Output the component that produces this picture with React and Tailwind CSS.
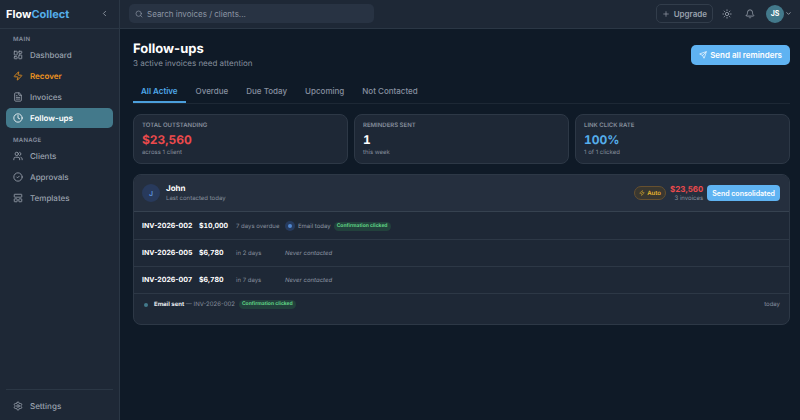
import React from 'react';
import {
  LayoutDashboard, Zap, FileText, Clock, Users, CircleCheck,
  Settings, ChevronLeft, ChevronDown, Search, Plus, Sun, Bell, Send,
} from 'lucide-react';

const mainNav = [
  { label: 'Dashboard', icon: LayoutDashboard, style: 'font-medium text-[#9aa2ae]' },
  { label: 'Recover', icon: Zap, style: 'font-semibold text-[#f0961f]' },
  { label: 'Invoices', icon: FileText, style: 'font-medium text-[#9aa2ae]' },
  { label: 'Follow-ups', icon: Clock, style: 'font-semibold text-white bg-[#43798b]', current: true },
];

function TemplateIcon({ size }) {
  return (
    <svg width={size} height={size} viewBox="0 0 24 24" fill="none" stroke="currentColor" strokeWidth="2" strokeLinejoin="round" className="shrink-0" aria-hidden="true">
      <rect x="3" y="3" width="18" height="7" rx="1" />
      <rect x="3" y="14" width="7" height="7" rx="1" />
      <rect x="14" y="14" width="7" height="7" rx="1" />
    </svg>
  );
}

const manageNav = [
  { label: 'Clients', icon: Users, style: 'font-medium text-[#9aa2ae]' },
  { label: 'Approvals', icon: CircleCheck, style: 'font-medium text-[#9aa2ae]' },
  { label: 'Templates', icon: TemplateIcon, style: 'font-medium text-[#9aa2ae]' },
];

const tabs = ['All Active', 'Overdue', 'Due Today', 'Upcoming', 'Not Contacted'];

const stats = [
  { label: 'TOTAL OUTSTANDING', value: '$23,560', note: 'across 1 client', color: 'text-[#ec4a4c]' },
  { label: 'REMINDERS SENT', value: '1', note: 'this week', color: 'text-white' },
  { label: 'LINK CLICK RATE', value: '100%', note: '1 of 1 clicked', color: 'text-[#55aeeb]' },
];

const invoices = [
  { id: 'INV-2026-002', amount: '$10,000', due: '7 days overdue', contacted: true },
  { id: 'INV-2026-005', amount: '$6,780', due: 'in 2 days' },
  { id: 'INV-2026-007', amount: '$6,780', due: 'in 7 days' },
];

function NavLink({ item }) {
  const Icon = item.icon;
  return (
    <a href="#" aria-current={item.current ? 'page' : undefined} className={`flex h-5 items-center gap-[7px] rounded-[5px] px-[7px] text-[8px] ${item.style}`}>
      <Icon size={10} />
      {item.label}
    </a>
  );
}

function Confirmed() {
  return (
    <span className="rounded-full bg-[#22413c] px-[3px] text-[5px] leading-[9px] font-bold text-[#5fd184]">
      Confirmation clicked
    </span>
  );
}

function Sidebar() {
  return (
    <aside className="flex w-[120px] shrink-0 flex-col border-r border-[#2b3745] bg-[#1e2836]">
      <div className="flex h-[29px] items-center justify-between border-b border-[#2b3745] pr-2.5 pb-px pl-1.5">
        <span className="text-[11px] leading-4 font-bold text-white">
          Flow<span className="text-[#55aeeb]">Collect</span>
        </span>
        <button aria-label="Collapse sidebar" className="text-[#a3abb6]"><ChevronLeft size={9} /></button>
      </div>
      <nav className="flex flex-1 flex-col gap-px px-1.5 pt-1.5">
        <h2 className="px-[7px] text-[6px] leading-[9px] font-semibold tracking-wider text-[#8790a0]">MAIN</h2>
        {mainNav.map((item) => <NavLink key={item.label} item={item} />)}
        <h2 className="mt-[7px] px-[7px] text-[6px] leading-[9px] font-semibold tracking-wider text-[#8790a0]">MANAGE</h2>
        {manageNav.map((item) => <NavLink key={item.label} item={item} />)}
      </nav>
      <div className="mx-1.5 border-t border-[#2b3745] pt-1.5 pb-1">
        <NavLink item={{ label: 'Settings', icon: Settings, style: 'font-medium text-[#9aa2ae]' }} />
      </div>
    </aside>
  );
}

function TopBar() {
  return (
    <header className="flex h-[29px] items-center justify-between border-b border-[#2b3745] bg-[#1e2836] pr-2 pb-px pl-[9px]">
      <div className="flex h-[19px] w-[245px] items-center gap-1 rounded-[5px] bg-[#283343] px-1.5 text-[#8d96a4]">
        <label htmlFor="search" aria-label="Search"><Search size={8} /></label>
        <input id="search" type="search" placeholder="Search invoices / clients..." className="h-full w-full bg-transparent text-[8px] outline-none placeholder:text-[#8d96a4]" />
      </div>
      <div className="flex items-center text-[#9aa2ae]">
        <button className="flex h-[19px] items-center gap-1 rounded-[5px] border border-[#323d4b] px-[5px] text-[8px] font-semibold">
          <Plus size={8} />Upgrade
        </button>
        <button aria-label="Toggle theme" className="ml-[9px]"><Sun size={10} /></button>
        <button aria-label="Notifications" className="ml-[13px]"><Bell size={10} /></button>
        <button aria-label="Account menu" className="ml-[11px] flex items-center gap-px">
          <span className="flex size-[18px] items-center justify-center rounded-full bg-[#43798b] text-[7px] leading-none font-bold text-white">JS</span>
          <ChevronDown size={7} strokeWidth={3} />
        </button>
      </div>
    </header>
  );
}

function InvoiceRow({ invoice }) {
  return (
    <tr className="h-[27px] border-b border-[#2d3846] whitespace-nowrap">
      <td className="pt-0.5 pl-2 font-bold text-white">{invoice.id}</td>
      <td className="pt-0.5 font-bold text-white tabular-nums">{invoice.amount}</td>
      <td className="pt-0.5 text-[6px] text-[#868f9d]">{invoice.due}</td>
      <td className="pt-0.5 text-[6px] text-[#8c95a3]">
        {invoice.contacted ? (
          <span className="flex items-center gap-[3px]">
            <span className="flex size-2.5 items-center justify-center rounded-full bg-[#263b5e]">
              <span className="size-1 rounded-full bg-[#5287cf]" />
            </span>
            Email today
            <Confirmed />
          </span>
        ) : <em>Never contacted</em>}
      </td>
    </tr>
  );
}

export default function App() {
  return (
    <div className="flex min-h-screen bg-[#0f1a27] font-['Inter',sans-serif] [text-rendering:geometricPrecision]">
      <Sidebar />
      <div className="min-w-0 flex-1">
        <TopBar />
        <main className="pt-3 pr-2.5 pl-[13px]">
          <div className="flex items-center justify-between">
            <div>
              <h1 className="text-[13px] leading-4 font-bold text-white">Follow-ups</h1>
              <p className="text-[8px] leading-3 text-[#868f9d]">3 active invoices need attention</p>
            </div>
            <button className="flex h-5 items-center gap-[3px] rounded-[5px] bg-[#5fb3f2] px-2 text-[8px] font-semibold text-white">
              <Send size={8} />Send all reminders
            </button>
          </div>

          <div role="tablist" className="mt-[11px] flex gap-0.5 border-b border-[#1d2835]">
            {tabs.map((tab, i) => (
              <button key={tab} role="tab" aria-selected={i === 0} className={`h-[23px] border-b-2 px-2 text-[8px] ${i === 0 ? 'border-[#4b9fdc] font-semibold text-[#4fa9ea]' : 'border-transparent font-medium text-[#8790a0]'}`}>
                {tab}
              </button>
            ))}
          </div>

          <section className="mt-2.5 grid grid-cols-3 gap-1.5">
            {stats.map((stat) => (
              <div key={stat.label} className="rounded-lg border border-[#2d3846] bg-[#1e2836] px-2 pt-[7px] pb-1.5">
                <h2 className="text-[6px] leading-2 font-semibold text-[#868f9d]">{stat.label}</h2>
                <p className={`mt-1 mb-[3px] text-[12px] leading-3 font-bold tabular-nums ${stat.color}`}>{stat.value}</p>
                <p className="text-[6px] leading-2 text-[#868f9d]">{stat.note}</p>
              </div>
            ))}
          </section>

          <section className="mt-2.5 overflow-hidden rounded-lg border border-[#2d3846] bg-[#1e2836]">
            <div className="flex h-[37px] items-center justify-between border-b border-[#364250] bg-[#252f3e] pr-[9px] pl-2">
              <div className="flex items-center gap-1.5">
                <span className="flex size-[18px] items-center justify-center rounded-full bg-[#283a5c] text-[7px] leading-none font-semibold text-[#5a90da]">J</span>
                <div>
                  <h2 className="text-[8px] leading-[11px] font-bold text-white">John</h2>
                  <p className="text-[6px] leading-[10px] text-[#868f9d]">Last contacted today</p>
                </div>
              </div>
              <div className="flex items-center gap-1">
                <span className="flex h-3.5 items-center gap-0.5 rounded-full border border-[#66502f] bg-[#393730] px-1 text-[6px] font-semibold text-[#e9b72f]">
                  <Zap size={6} />Auto
                </span>
                <div className="text-right">
                  <p className="text-[8px] leading-[10px] font-bold text-[#ec4a4c] tabular-nums">$23,560</p>
                  <p className="text-[6px] leading-[9px] text-[#868f9d]">3 invoices</p>
                </div>
                <button className="h-4 rounded bg-[#5fb3f2] px-[5px] text-[7px] leading-none font-semibold text-white">Send consolidated</button>
              </div>
            </div>
            <table className="w-full table-fixed border-collapse text-[7px]">
              <colgroup>
                <col className="w-[65px]" />
                <col className="w-[37px]" />
                <col className="w-[49px]" />
                <col />
              </colgroup>
              <tbody>
                {invoices.map((invoice) => <InvoiceRow key={invoice.id} invoice={invoice} />)}
              </tbody>
            </table>
            <div className="flex h-[30px] items-start justify-between pt-1.5 pr-[9px] pl-2.5 text-[6px] leading-[10px] text-[#868f9d]">
              <p className="flex items-center gap-1">
                <span className="mr-0.5 size-1 rounded-full bg-[#43798b]" />
                <span><strong className="font-bold text-[#e8ebef]">Email sent</strong> — INV-2026-002</span>
                <Confirmed />
              </p>
              <time>today</time>
            </div>
          </section>
        </main>
      </div>
    </div>
  );
}
